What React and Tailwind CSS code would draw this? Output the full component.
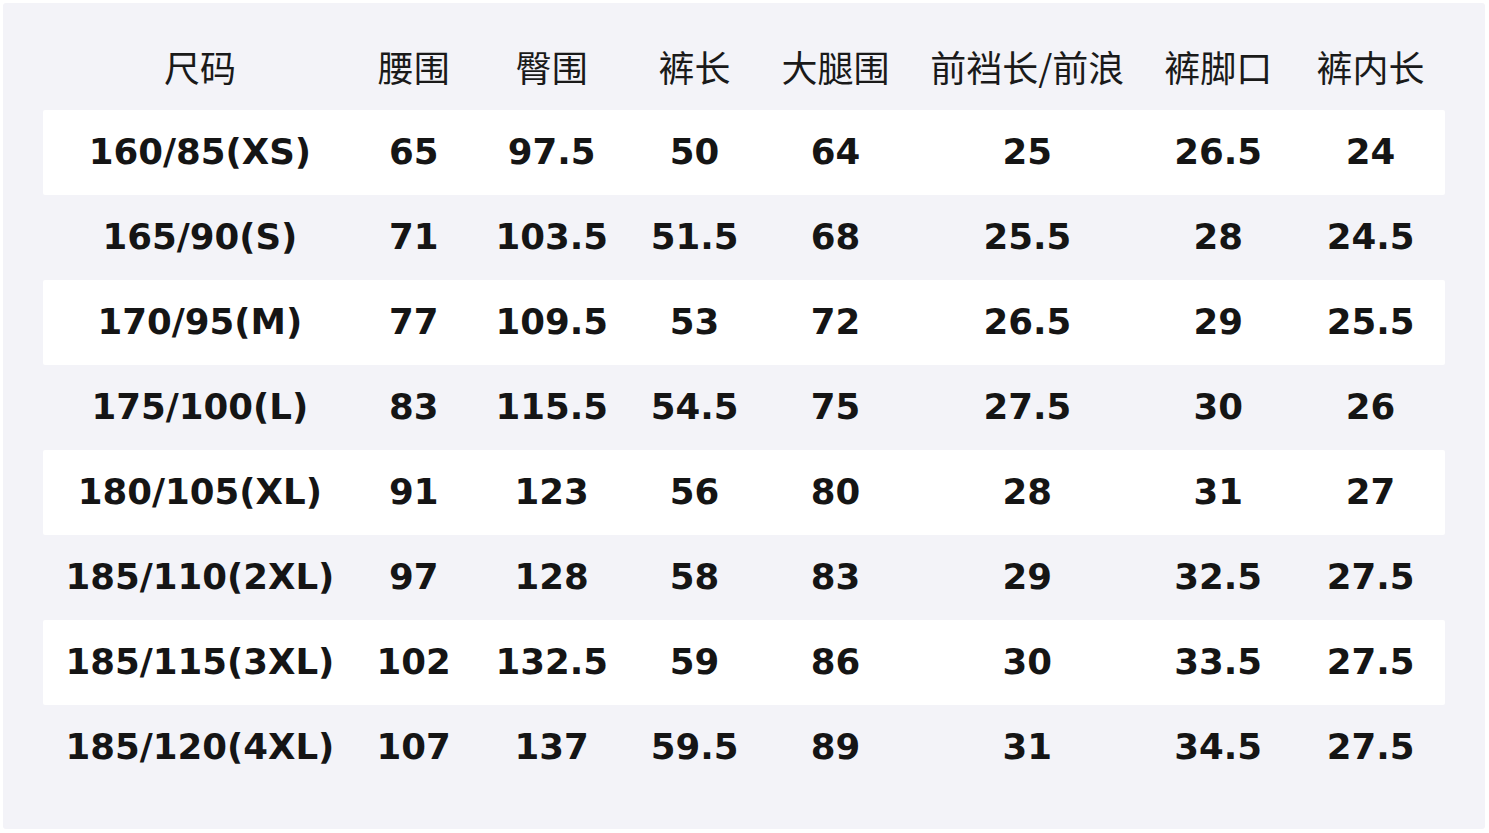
import React from "react";

const headers = ["尺码", "腰围", "臀围", "裤长", "大腿围", "前裆长/前浪", "裤脚口", "裤内长"];
const widths = ["w-[314px]", "w-[114px]", "w-[162px]", "w-[124px]", "w-[158px]", "w-[226px]", "w-[156px]", "w-[149px]"];
const rows = [
  ["160/85(XS)", "65", "97.5", "50", "64", "25", "26.5", "24"],
  ["165/90(S)", "71", "103.5", "51.5", "68", "25.5", "28", "24.5"],
  ["170/95(M)", "77", "109.5", "53", "72", "26.5", "29", "25.5"],
  ["175/100(L)", "83", "115.5", "54.5", "75", "27.5", "30", "26"],
  ["180/105(XL)", "91", "123", "56", "80", "28", "31", "27"],
  ["185/110(2XL)", "97", "128", "58", "83", "29", "32.5", "27.5"],
  ["185/115(3XL)", "102", "132.5", "59", "86", "30", "33.5", "27.5"],
  ["185/120(4XL)", "107", "137", "59.5", "89", "31", "34.5", "27.5"],
];

export default function App() {
  return (
    <div className="w-[1489px] h-[833px] bg-white p-[3px]">
      <div className="w-[1482px] h-[826px] bg-[#f3f3f8] rounded-[3px] pt-[22px] px-[40px]">
        <div className="flex h-[85px] items-center text-[36px] text-[#1a1a1a] font-['Noto_Sans_CJK_SC','Noto_Sans',sans-serif]">
          {headers.map((h, i) => (
            <div key={i} className={`${widths[i]} text-center pb-[4px]`}>{h}</div>
          ))}
        </div>
        {rows.map((r, ri) => (
          <div
            key={ri}
            className={`flex h-[85px] items-center rounded-[2px] text-[35.6px] font-bold text-[#151515] font-['DejaVu_Sans',sans-serif] ${ri % 2 === 0 ? "bg-white" : ""}`}
          >
            {r.map((c, ci) => (
              <div key={ci} className={`${widths[ci]} text-center pb-[2px]`}>{c}</div>
            ))}
          </div>
        ))}
      </div>
    </div>
  );
}
